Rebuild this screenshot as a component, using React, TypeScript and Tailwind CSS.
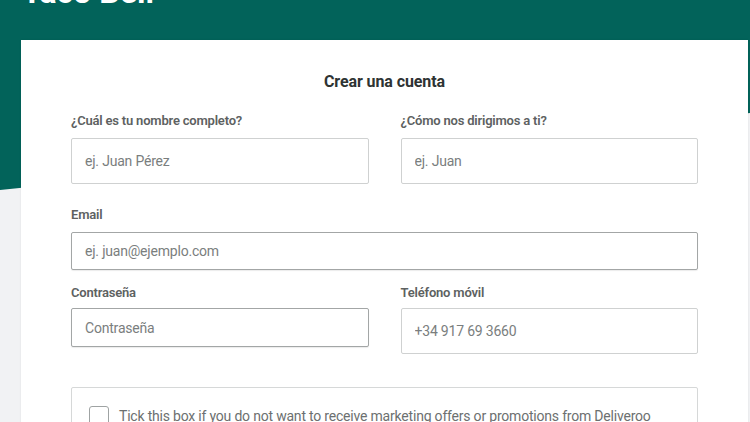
import { useState } from "react";

type TField = {
	label: string;
	placeholder: string;
	height: string;
	dark?: boolean;
	gap?: string;
};

function Field({ label, placeholder, height, dark, gap = "mb-[7px]" }: TField) {
	return (
		<div className="flex flex-col">
			<p className={`text-[13px] leading-5 font-semibold text-[#5d6161] tracking-[-0.2px] ${gap}`}>{label}</p>
			<input
				placeholder={placeholder}
				className={`${height} w-full rounded-[2px] border bg-white px-[13px] text-[14px] tracking-[-0.2px] text-[#2e3333] placeholder:text-[#7a7e7e] outline-none ${
					dark ? "border-[#a3a6a6] shadow-[0_1px_1px_rgba(0,0,0,0.08)]" : "border-[#cfd1d1]"
				}`}
			/>
		</div>
	);
}

export default function App() {
	const [optOut, setOptOut] = useState(false);

	return (
		<div
			className="relative w-[750px] h-[422px] overflow-hidden bg-[#f1f2f4]"
			style={{ fontFamily: "Roboto, 'Liberation Sans', sans-serif" }}
		>
			<div
				className="absolute inset-0 bg-[#02635a]"
				style={{ clipPath: "polygon(0 0, 100% 0, 100% 113px, 0 190px)" }}
			/>

			<div className="relative h-[40px] overflow-hidden pl-[22px]">
				<h1 className="mt-[-24px] text-[32px] leading-none font-bold text-white">Taco Bell</h1>
			</div>

			<div className="relative ml-[21px] w-[727px] bg-white shadow-[0_0_2px_rgba(0,0,0,0.08)] px-[50px] pt-[30px] pb-10">
				<h2 className="text-center text-[16px] leading-6 font-bold text-[#2e3333] tracking-[-0.1px]">Crear una cuenta</h2>

				<div className="grid grid-cols-2 gap-x-8 mt-[17px]">
					<Field label="¿Cuál es tu nombre completo?" placeholder="ej. Juan Pérez" height="h-[46px]" />
					<Field label="¿Cómo nos dirigimos a ti?" placeholder="ej. Juan" height="h-[46px]" />
				</div>

				<div className="mt-[21px]">
					<Field label="Email" placeholder="ej. juan@ejemplo.com" height="h-[38px]" dark />
				</div>

				<div className="grid grid-cols-2 gap-x-8 items-start mt-[13px]">
					<Field label="Contraseña" placeholder="Contraseña" height="h-[39px]" dark gap="mb-[5px]" />
					<Field label="Teléfono móvil" placeholder="+34 917 69 3660" height="h-[46px]" gap="mb-[5px]" />
				</div>

				<div className="mt-[33px] border border-[#d6d8d8] rounded-[2px] px-[17px] py-[17px]">
					<label className="flex items-start gap-[10px] cursor-pointer">
						<input
							type="checkbox"
							checked={optOut}
							onChange={() => setOptOut(!optOut)}
							className="appearance-none mt-[1px] w-[20px] h-[20px] shrink-0 rounded-[3px] border border-[#9fa3a3] bg-white"
						/>
						<span className="text-[14px] leading-[22px] text-[#6c7070] tracking-[-0.2px]">
							Tick this box if you do not want to receive marketing offers or promotions from Deliveroo
						</span>
					</label>
				</div>
			</div>
		</div>
	);
}
